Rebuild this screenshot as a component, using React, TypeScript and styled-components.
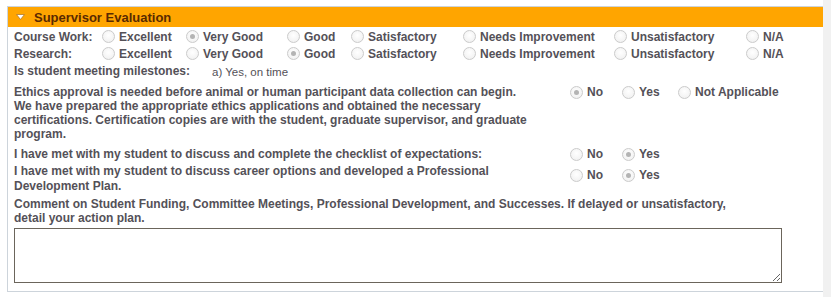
import React from 'react';
import styled, { createGlobalStyle } from 'styled-components';

const GlobalStyle = createGlobalStyle`
  html, body {
    margin: 0;
    padding: 0;
    background: #fff;
  }
  body {
    font-family: "Liberation Sans", Arial, sans-serif;
  }
`;

const Page = styled.div`
  display: flex;
  width: 831px;
  height: 297px;
  overflow: hidden;
`;

const Main = styled.div`
  flex: 1;
  padding: 6px 0 0 7px;
`;

const Gutter = styled.div`
  width: 8px;
  background: #f1f1f1;
`;

const Panel = styled.section`
  border: 1px solid #cdd4db;
  border-right: none;
  padding-bottom: 8px;
`;

const Header = styled.div`
  display: flex;
  align-items: center;
  gap: 9px;
  height: 20px;
  padding-left: 8px;
  background: #ffa500;
  color: #5a2a00;
  font-size: 13px;
  font-weight: bold;
`;

const Body = styled.div`
  padding: 1px 0 0 6px;
  color: #545158;
  font-size: 12px;
  font-weight: bold;
`;

const RatingRow = styled.div`
  display: grid;
  grid-template-columns: 88px 84px 101px 64px 112px 151px 132px 60px;
  align-items: center;
  height: 17px;
`;

const Option = styled.label`
  display: flex;
  align-items: center;
  gap: 4px;
  white-space: nowrap;
`;

const Radio = styled.span<{ $checked?: boolean }>`
  position: relative;
  box-sizing: border-box;
  width: 13px;
  height: 13px;
  border-radius: 50%;
  border: 1px solid #cbcbcb;
  background: radial-gradient(circle at 50% 40%, #ffffff 0%, #f3f3f3 70%, #e6e6e6 100%);
  flex-shrink: 0;

  &::after {
    content: '';
    display: ${p => (p.$checked ? 'block' : 'none')};
    position: absolute;
    left: 3px;
    top: 3px;
    width: 5px;
    height: 5px;
    border-radius: 50%;
    background: #b4b4b4;
  }
`;

const MilestoneRow = styled.div`
  display: flex;
  align-items: center;
  height: 18px;
`;

const MilestoneLabel = styled.span`
  width: 198px;
`;

const Answer = styled.span`
  font-weight: normal;
  font-size: 11.5px;
  padding-top: 2px;
`;

const QuestionRow = styled.div<{ $top?: number; $radioTop?: number }>`
  display: grid;
  grid-template-columns: 556px auto;
  margin-top: ${p => p.$top ?? 0}px;
  line-height: ${p => (p.$radioTop !== undefined ? 15 : 14)}px;
`;

const QuestionText = styled.div`
  width: 520px;
`;

const Choices = styled.div<{ $offset?: number }>`
  display: flex;
  align-items: center;
  padding-top: ${p => p.$offset ?? 0}px;
  height: 14px;
`;

const Choice = styled(Option)<{ $w?: number }>`
  width: ${p => (p.$w ? `${p.$w}px` : 'auto')};
`;

const CommentLabel = styled.div`
  width: 740px;
  margin-top: 3px;
  line-height: 14px;
`;

const CommentBox = styled.textarea`
  display: block;
  box-sizing: border-box;
  width: 768px;
  height: 55px;
  margin-top: 3px;
  border: 1px solid #6b655b;
  border-radius: 0;
  padding: 2px;
  font-family: "Liberation Sans", Arial, sans-serif;
  font-size: 12px;
  outline: none;
`;

const Caret = () => (
  <svg width="9" height="6" viewBox="0 0 9 6">
    <polygon points="0.5,0.5 8.5,0.5 4.5,5.5" fill="#ffffff" stroke="#b07a2a" strokeWidth="0.8" />
  </svg>
);

const ratings = ['Excellent', 'Very Good', 'Good', 'Satisfactory', 'Needs Improvement', 'Unsatisfactory', 'N/A'];

const ratingRows = [
  { label: 'Course Work:', value: 'Very Good' },
  { label: 'Research:', value: 'Good' },
];

type ChoiceDef = { text: string; w?: number };

const yesNoQuestions: { text: string; choices: ChoiceDef[]; value: string; top: number; radioTop?: number }[] = [
  {
    text:
      'Ethics approval is needed before animal or human participant data collection can begin. We have prepared the appropriate ethics applications and obtained the necessary certifications. Certification copies are with the student, graduate supervisor, and graduate program.',
    choices: [{ text: 'No', w: 52 }, { text: 'Yes', w: 56 }, { text: 'Not Applicable' }],
    value: 'No',
    top: 5,
  },
  {
    text: 'I have met with my student to discuss and complete the checklist of expectations:',
    choices: [{ text: 'No', w: 52 }, { text: 'Yes' }],
    value: 'Yes',
    top: 6,
  },
  {
    text: 'I have met with my student to discuss career options and developed a Professional Development Plan.',
    choices: [{ text: 'No', w: 52 }, { text: 'Yes' }],
    value: 'Yes',
    top: 3,
    radioTop: 4,
  },
];

export default function App() {
  return (
    <Page>
      <GlobalStyle />
      <Main>
        <Panel>
          <Header>
            <Caret />
            Supervisor Evaluation
          </Header>
          <Body>
            {ratingRows.map(row => (
              <RatingRow key={row.label}>
                <span>{row.label}</span>
                {ratings.map(r => (
                  <Option key={r}>
                    <Radio $checked={r === row.value} />
                    {r}
                  </Option>
                ))}
              </RatingRow>
            ))}
            <MilestoneRow>
              <MilestoneLabel>Is student meeting milestones:</MilestoneLabel>
              <Answer>a) Yes, on time</Answer>
            </MilestoneRow>
            {yesNoQuestions.map(q => (
              <QuestionRow key={q.text} $top={q.top} $radioTop={q.radioTop}>
                <QuestionText>{q.text}</QuestionText>
                <Choices $offset={q.radioTop}>
                  {q.choices.map(c => (
                    <Choice key={c.text} $w={c.w}>
                      <Radio $checked={c.text === q.value} />
                      {c.text}
                    </Choice>
                  ))}
                </Choices>
              </QuestionRow>
            ))}
            <CommentLabel>
              Comment on Student Funding, Committee Meetings, Professional Development, and Successes. If delayed or
              unsatisfactory, detail your action plan.
            </CommentLabel>
            <CommentBox />
          </Body>
        </Panel>
      </Main>
      <Gutter />
    </Page>
  );
}
